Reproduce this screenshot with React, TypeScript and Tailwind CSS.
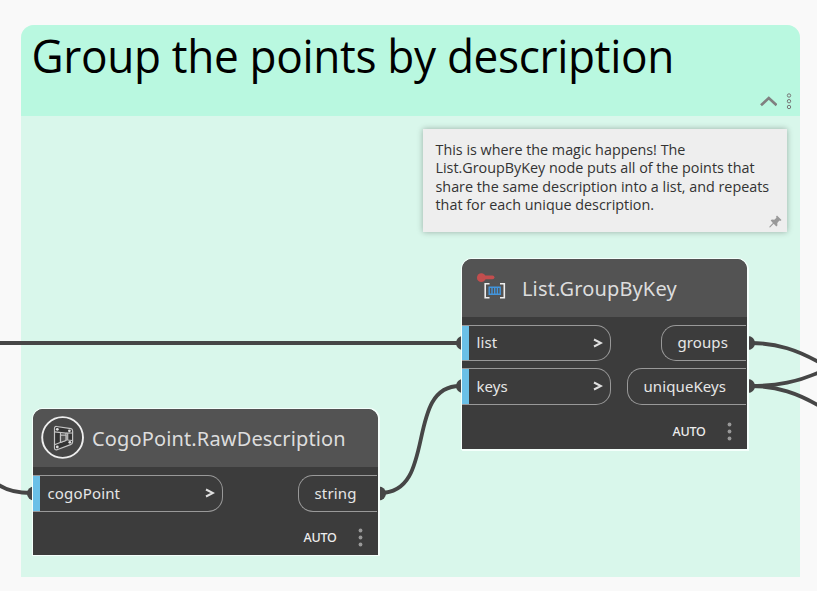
import type { ReactNode } from "react";

function InputPort({ label, width }: { label: string; width: string }) {
  return (
    <div className={`flex h-full items-center rounded-r-[15px] border border-l-0 border-[#999] ${width}`}>
      <span className="h-full w-[7px] shrink-0 bg-[#6ac0e7]" />
      <span className="ml-[7.5px] flex-1 pb-px whitespace-nowrap">{label}</span>
      <svg className="mr-[7px] h-[11px] w-[10px]" viewBox="0 0 10 11" fill="none" stroke="#e0e0e0" strokeWidth="2">
        <path d="M1 1.5 8 5 1 8.5" />
      </svg>
    </div>
  );
}

function OutputPort({ label, width }: { label: string; width: string }) {
  return (
    <div className={`mr-px flex h-full items-center rounded-l-[15px] border border-r-0 border-[#999] pl-[15.5px] ${width}`}>
      <span className="pb-px whitespace-nowrap">{label}</span>
    </div>
  );
}

function Row({ height, children }: { height: string; children: ReactNode }) {
  return <div className={`flex shrink-0 items-center justify-between ${height}`}>{children}</div>;
}

function Footer({ height }: { height: string }) {
  return (
    <div className={`flex shrink-0 items-center justify-end pr-[15px] ${height}`}>
      <span className="mr-[21.5px] pt-[1.5px] text-[12.5px] font-medium tracking-[-0.25px] text-[#eee]">AUTO</span>
      <svg className="h-[19px] w-[5px]" viewBox="0 0 5 19" fill="#999">
        <circle cx="2.5" cy="2.5" r="1.9" />
        <circle cx="2.5" cy="9.5" r="1.9" />
        <circle cx="2.5" cy="16.5" r="1.9" />
      </svg>
    </div>
  );
}

function KeyListIcon() {
  return (
    <svg className="h-[30px] w-[32px]" viewBox="0 0 32 30" fill="none">
      <circle cx="5.3" cy="4.7" r="4.4" fill="#c24e4e" />
      <path d="M8 4.3H16.5" stroke="#c24e4e" strokeWidth="3.8" strokeLinecap="round" />
      <path d="M13.5 10.7H9.2V24.7H13.5M24 10.7H28.3V24.7H24" stroke="#eee" strokeWidth="1.6" />
      <path d="M13.2 14.2H24.2V21.2H13.2ZM16 14V21M18.7 14V21M21.4 14V21" stroke="#4295dc" strokeWidth="1.4" />
    </svg>
  );
}

function CogoIcon() {
  return (
    <svg className="h-[44px] w-[44px]" viewBox="0 0 44 44" fill="none">
      <circle cx="22.6" cy="21.5" r="20.4" fill="#464646" stroke="#eee" strokeWidth="1.9" />
      <g stroke="#c4c4c4" strokeWidth="1.2" strokeLinejoin="round">
        <path d="M14.5 12.5Q14.5 10.2 16.5 10.5L31 12.6Q32.6 13 32.6 15V26Q32.6 28 30.5 28.6L17 33.8Q14.5 34.3 14.5 32Z" fill="#333" />
        <path d="M14.5 15.8 26 17.2V24.3L14.5 28.8" />
        <path d="M20.5 16.5V26.5M27.7 16.8V24L32.3 24.5M26 17.2 32.3 17" />
        <path d="M20.5 19.2H26V24.5L20.5 26.5Z" fill="#505050" />
      </g>
      <g fill="#ddd">
        <circle cx="17.3" cy="13.3" r="1.4" />
        <circle cx="29.4" cy="14.8" r="1.4" />
        <circle cx="17.3" cy="31" r="1.4" />
        <circle cx="29.8" cy="26.3" r="1.4" />
      </g>
    </svg>
  );
}

export default function App() {
  return (
    <main className="relative h-[591px] w-[817px] overflow-hidden bg-[#f9f9f9] font-['Open_Sans','Noto_Sans',sans-serif]">
      <section className="absolute top-[25px] left-[21px] flex h-[552px] w-[779px] flex-col overflow-hidden rounded-t-[13px] bg-[#d9f7eb]">
        <header className="flex h-[91px] shrink-0 flex-col justify-between bg-[#b9f8e0]">
          <h1 className="origin-left scale-x-[0.96] pl-[11px] text-[46px] leading-[60px] font-normal tracking-[-0.35px] whitespace-nowrap text-black">
            Group the points by description
          </h1>
          <div className="flex items-center justify-end gap-[9px] pr-[8px] pb-[6px]">
            <svg className="h-[12px] w-[18px]" viewBox="0 0 18 12" fill="none" stroke="#808080" strokeWidth="2.7">
              <path d="M2 10.3 9.8 3 17.6 10.3" />
            </svg>
            <svg className="h-[18px] w-[6px]" viewBox="0 0 6 18" fill="none" stroke="#777" strokeWidth="1">
              <circle cx="3" cy="3.5" r="1.7" />
              <circle cx="3" cy="9.2" r="1.7" />
              <circle cx="3" cy="15" r="1.7" />
            </svg>
          </div>
        </header>
      </section>

      <svg className="absolute inset-0 h-[591px] w-[817px]" viewBox="0 0 817 591" fill="none">
        <g stroke="#464646" strokeWidth="3.8">
          <path d="M0 343H460" />
          <path d="M380 493C438 493 404 386 460 386" />
          <path d="M-4 483C5 490 16 493 31 493" />
          <path d="M750 343C777 343 798 350 822 364" />
          <path d="M750 386C777 386 798 382 822 371" />
          <path d="M750 386C777 386 798 393 822 407.5" />
        </g>
        <g fill="#464646">
          <circle cx="463" cy="343" r="7" />
          <circle cx="463" cy="386" r="7" />
          <circle cx="748" cy="343" r="7" />
          <circle cx="748" cy="386" r="7" />
          <circle cx="34" cy="493.5" r="7" />
          <circle cx="379" cy="493.5" r="7" />
        </g>
      </svg>

      <aside className="absolute top-[129px] left-[423px] flex h-[103px] w-[364px] flex-col bg-[#eee] pt-[12px] pl-[12.5px] shadow-[0_0_6px_rgba(0,0,0,0.3)]">
        <p className="text-[14.35px] leading-[18.4px] whitespace-nowrap text-[#333]">
          This is where the magic happens! The
          <br />
          List.GroupByKey node puts all of the points that
          <br />
          share the same description into a list, and repeats
          <br />
          that for each unique description.
        </p>
        <svg className="mr-[5px] h-[13px] w-[13px] self-end" viewBox="0 0 13 13" fill="#999">
          <path d="M8 .5 12.5 5 11.2 6 10.4 5.6 8.3 8 8.4 10.5 7.3 11.4 4.7 8.7 1 12.5.3 12.3.5 11.4 3.9 7.9 1.7 5.6 2.8 4.6 5.3 4.8 7.5 2.7 7 1.8Z" />
        </svg>
      </aside>

      <article className="absolute top-[259px] left-[462px] flex h-[190px] w-[285px] flex-col rounded-t-[10px] bg-[#3c3c3c] font-['Noto_Sans','Open_Sans',sans-serif] text-[15px] tracking-[0.1px] text-[#e6e6e6] shadow-[0_0_0_1px_#f4fffb,1px_1px_0_1px_#f4fffb]">
        <header className="flex h-[58px] shrink-0 items-center rounded-t-[10px] bg-[#535353] pl-[14px]">
          <KeyListIcon />
          <h2 className="ml-[14px] pt-[2px] text-[20px] font-normal tracking-[0.14px] whitespace-nowrap text-[#ddd]">List.GroupByKey</h2>
        </header>
        <div className="flex flex-col gap-[7px] pt-2">
          <Row height="h-9">
            <InputPort label="list" width="w-[149px]" />
            <OutputPort label="groups" width="w-[85px]" />
          </Row>
          <Row height="h-[37px]">
            <InputPort label="keys" width="w-[149px]" />
            <OutputPort label="uniqueKeys" width="w-[119px]" />
          </Row>
        </div>
        <Footer height="h-[53px]" />
      </article>

      <article className="absolute top-[409px] left-[33px] flex h-[146px] w-[345px] flex-col rounded-t-[10px] bg-[#3c3c3c] font-['Noto_Sans','Open_Sans',sans-serif] text-[15px] tracking-[0.15px] text-[#e6e6e6] shadow-[0_0_0_1px_#f4fffb,1px_0_0_1px_#f4fffb]">
        <header className="flex h-[58px] shrink-0 items-center rounded-t-[10px] bg-[#535353] pl-[7px]">
          <CogoIcon />
          <h2 className="ml-[8px] pt-[2px] text-[20px] font-normal tracking-[0.14px] whitespace-nowrap text-[#ddd]">CogoPoint.RawDescription</h2>
        </header>
        <div className="pt-2">
          <Row height="h-[37px]">
            <InputPort label="cogoPoint" width="w-[190px]" />
            <OutputPort label="string" width="w-[79px]" />
          </Row>
        </div>
        <Footer height="h-[51px]" />
      </article>
    </main>
  );
}
